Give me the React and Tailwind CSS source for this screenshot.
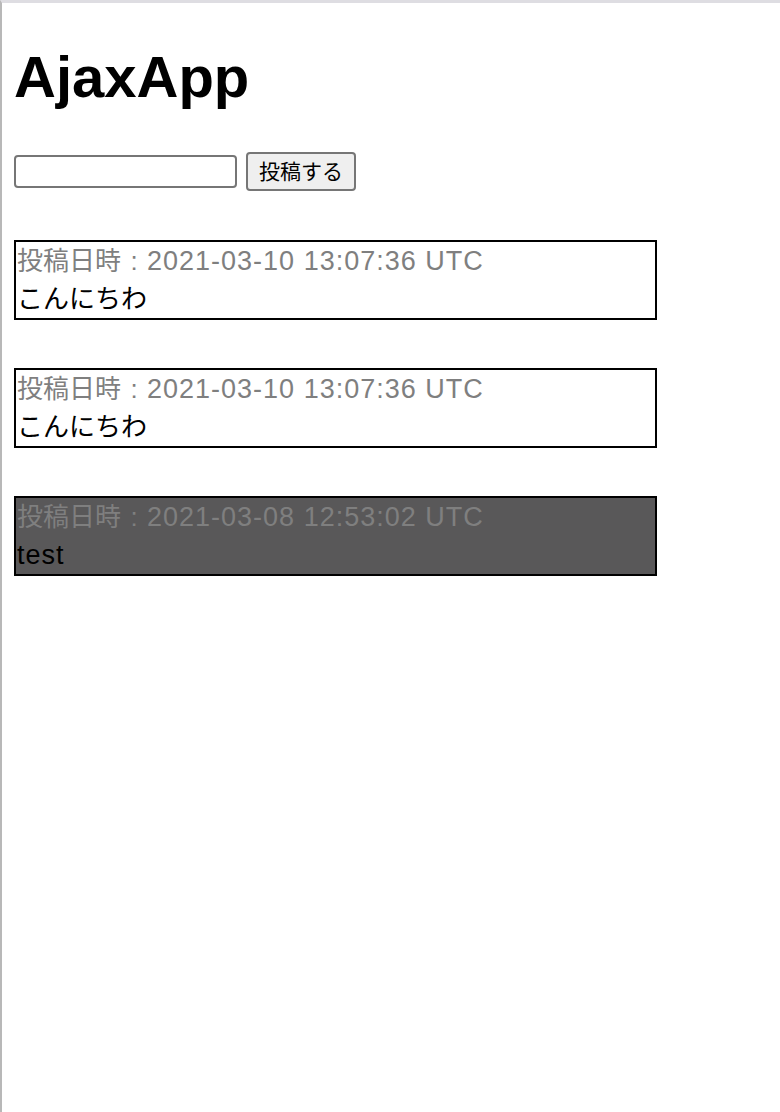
const posts = [
  { id: 3, date: "2021-03-10 13:07:36 UTC", body: "こんにちわ", latin: false, dark: false },
  { id: 2, date: "2021-03-10 13:07:36 UTC", body: "こんにちわ", latin: false, dark: false },
  { id: 1, date: "2021-03-08 12:53:02 UTC", body: "test", latin: true, dark: true },
];

export default function App() {
  return (
    <div
      lang="ja"
      className="min-h-[1112px] bg-white border-t-[3px] border-l-2 border-t-[#dedde2] border-l-[#b8b8b8] font-['Liberation_Sans','Noto_Sans_CJK_JP',sans-serif] text-black"
    >
      <div className="pl-[12px] pr-3 pt-[40px]">
        <h1 className="text-[58px] font-bold leading-[68px]">AjaxApp</h1>

        <form className="mt-[41px] flex items-center gap-[9px]" onSubmit={(e) => e.preventDefault()}>
          <input
            type="text"
            className="w-[223px] h-[33px] rounded-[4px] border-2 border-[#767676] bg-white px-1 text-[22px]"
          />
          <button
            type="submit"
            className="h-[39px] px-[11px] rounded-[4px] border-2 border-[#767676] bg-[#efefef] text-[21px] leading-none"
          >
            投稿する
          </button>
        </form>

        <div className="mt-[49px] flex flex-col gap-[48px]">
          {posts.map((p) => (
            <div
              key={p.id}
              className={
                "w-[643px] h-[80px] border-2 border-black pl-[1px] text-[26px] leading-[38px] " +
                (p.dark ? "bg-[#595859]" : "bg-white")
              }
            >
              <div className="text-[#7f7f7f]">
                投稿日時<span className="inline-block w-[26px] text-center">:</span>
                <span className="text-[27px] tracking-[1px]">{p.date}</span>
              </div>
              <div className={p.latin ? "text-[27px] tracking-[1px]" : ""}>{p.body}</div>
            </div>
          ))}
        </div>
      </div>
    </div>
  );
}
